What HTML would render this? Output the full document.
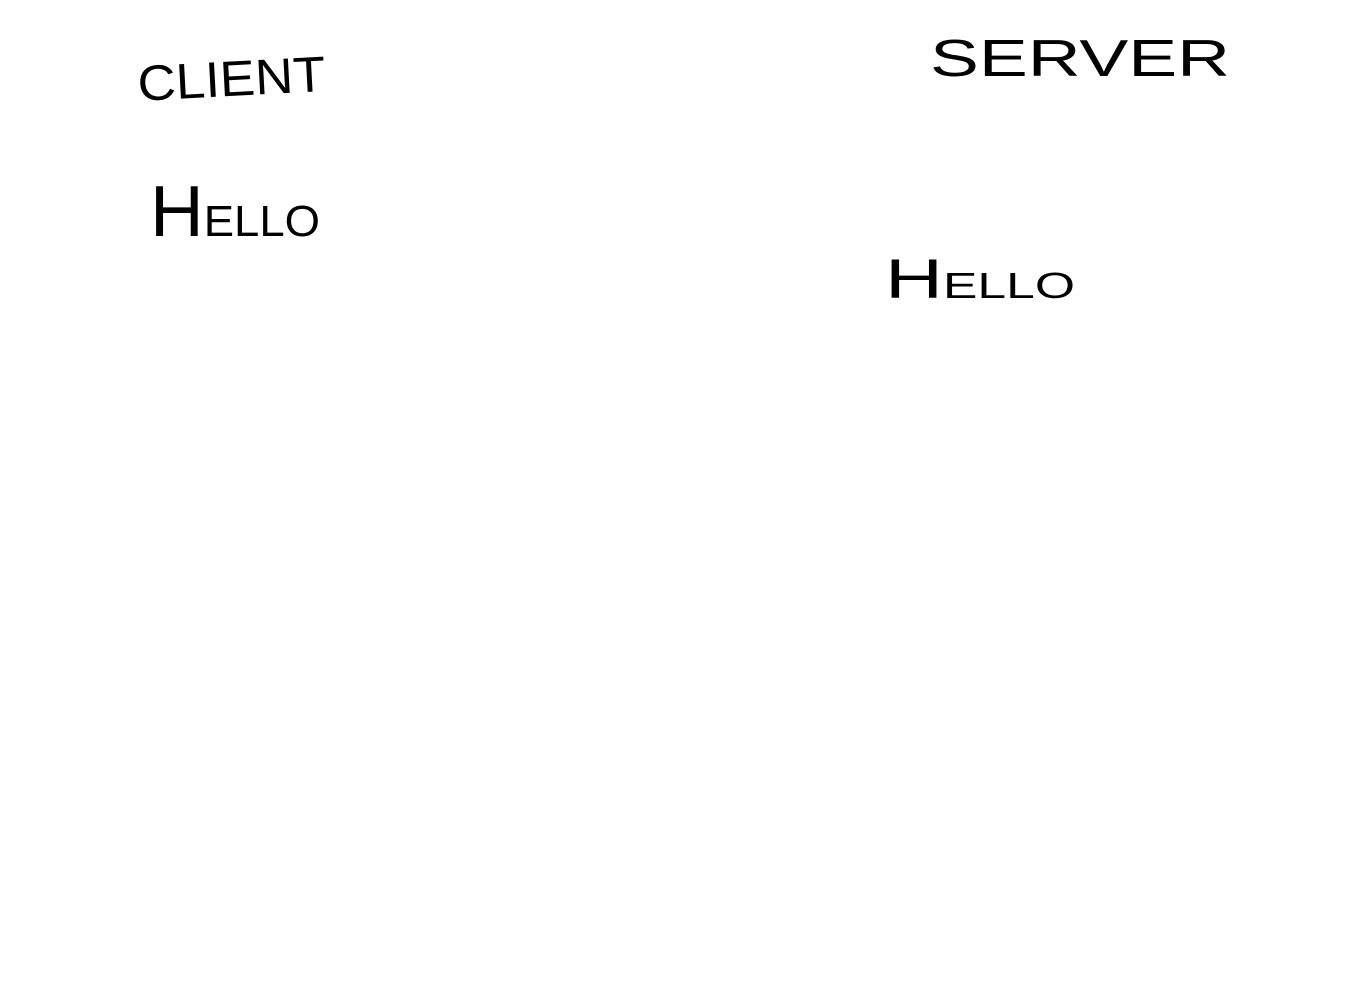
<!DOCTYPE html>
<html><head><meta charset="utf-8"><style>
html,body{margin:0;padding:0;background:#fff;width:1355px;height:1000px;overflow:hidden}
svg text{font-family:"Liberation Sans",sans-serif;fill:#000}
</style></head><body>
<svg width="1355" height="1000" viewBox="0 0 1355 1000" xmlns="http://www.w3.org/2000/svg">
<text x="137" y="96" font-size="50" textLength="188" lengthAdjust="spacingAndGlyphs" transform="rotate(-3 230 70)">CLIENT</text>
<text x="930" y="76" font-size="52" textLength="300" lengthAdjust="spacingAndGlyphs">SERVER</text>
<text x="150" y="236" font-size="72" textLength="170" lengthAdjust="spacingAndGlyphs">H<tspan font-size="44">ELLO</tspan></text>
<text x="885" y="298" font-size="56" textLength="190" lengthAdjust="spacingAndGlyphs">H<tspan font-size="36">ELLO</tspan></text>
</svg>
</body></html>
